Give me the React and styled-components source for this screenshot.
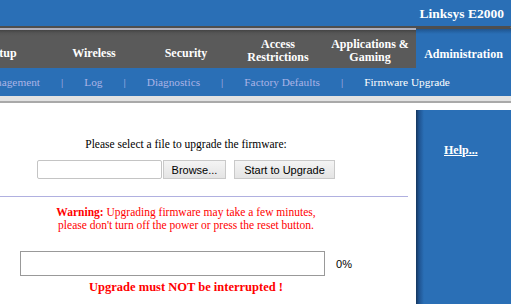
import React from 'react';
import styled, { createGlobalStyle } from 'styled-components';

const BLUE = '#2a6fb6';

const GlobalStyle = createGlobalStyle`
  html, body {
    margin: 0;
    padding: 0;
    background: #fff;
    overflow: hidden;
  }
  body {
    font-family: 'Liberation Serif', 'Times New Roman', serif;
  }
`;

const tabs = [
  { label: 'Setup' },
  { label: 'Wireless' },
  { label: 'Security' },
  { label: 'Access\nRestrictions', lines: 2 },
  { label: 'Applications &\nGaming', lines: 2 },
  { label: 'Administration', active: true },
];

const subItems = [
  { label: 'Management' },
  { label: 'Log' },
  { label: 'Diagnostics' },
  { label: 'Factory Defaults' },
  { label: 'Firmware Upgrade', active: true },
];

const App = () => {
  return (
    <>
      <GlobalStyle />
      <Page>
        <TopBar>
          <Brand>Linksys E2000</Brand>
        </TopBar>
        <TabBar>
          {tabs.map((tab) => (
            <Tab key={tab.label} $active={tab.active} $lines={tab.lines || 1}>
              {tab.label}
            </Tab>
          ))}
        </TabBar>
        <SubNav>
          {subItems.map((item, index) => (
            <React.Fragment key={item.label}>
              {index > 0 && <Pipe>|</Pipe>}
              <SubItem $active={item.active}>{item.label}</SubItem>
            </React.Fragment>
          ))}
        </SubNav>
        <Strip />
        <Body>
          <Content>
            <Section>
              <Prompt>Please select a file to upgrade the firmware:</Prompt>
              <FormRow>
                <FileField />
                <Button>Browse...</Button>
                <Button $wide>Start to Upgrade</Button>
              </FormRow>
            </Section>
            <Rule />
            <Section>
              <Warning>
                <b>Warning:</b> Upgrading firmware may take a few minutes,
                <br />
                please don't turn off the power or press the reset button.
              </Warning>
              <ProgressRow>
                <ProgressBox />
                <Percent>0%</Percent>
              </ProgressRow>
              <Alert>Upgrade must NOT be interrupted !</Alert>
            </Section>
          </Content>
          <HelpPanel>
            <HelpLink>Help...</HelpLink>
          </HelpPanel>
        </Body>
      </Page>
    </>
  );
};

const Page = styled.div`
  width: 511px;
  height: 304px;
  overflow: hidden;
  background: #fff;
`;

const TopBar = styled.div`
  height: 26px;
  background: ${BLUE};
  display: flex;
  align-items: center;
  justify-content: flex-end;
  padding-right: 7px;
`;

const Brand = styled.div`
  color: #fff;
  font-weight: bold;
  font-size: 13.5px;
  padding-top: 2px;
`;

const TabBar = styled.div`
  height: 40px;
  display: flex;
  background: #5a5a5a;
  border-top: 2px solid #4e4e4e;
  border-right: 1px solid #707070;
  margin-left: -44px;
`;

const Tab = styled.div`
  width: ${(p) => (p.$active ? '95px' : '92px')};
  flex-shrink: 0;
  display: flex;
  align-items: center;
  justify-content: center;
  text-align: center;
  white-space: pre-line;
  color: #fff;
  font-weight: bold;
  font-size: 12px;
  line-height: 13px;
  padding-top: ${(p) => (p.$active ? '12px' : p.$lines === 2 ? '5px' : '11px')};
  box-sizing: border-box;
  background: ${(p) =>
    p.$active
      ? `linear-gradient(#4e4e4e 0 1px, #1f558f 1px, ${BLUE} 6px)`
      : 'linear-gradient(#b0b0bd 0 2px, #444 2px, #555 5px, #5a5a5a 8px)'};
`;

const SubNav = styled.div`
  height: 28px;
  background: ${BLUE};
  display: flex;
  align-items: center;
  gap: 21px;
  margin-left: -19px;
  font-size: 11.3px;
`;

const SubItem = styled.span`
  color: ${(p) => (p.$active ? '#fff' : '#aab4e6')};
  white-space: nowrap;
`;

const Pipe = styled.span`
  color: #aab4e6;
`;

const Strip = styled.div`
  height: 5px;
  background: #e2e2e2;
  border-bottom: 2px solid #a9a9a9;
`;

const Body = styled.div`
  display: flex;
  align-items: flex-start;
  gap: 8px;
`;

const Content = styled.div`
  width: 408px;
  flex-shrink: 0;
`;

const Section = styled.div`
  width: 372px;
  display: flex;
  flex-direction: column;
  align-items: center;
  text-align: center;
`;

const Prompt = styled.div`
  margin-top: 35px;
  font-size: 11.5px;
  line-height: 13px;
  color: #000;
`;

const FormRow = styled.div`
  display: flex;
  align-items: center;
  margin-top: 9px;
`;

const FileField = styled.div`
  width: 123px;
  height: 17px;
  border: 1px solid #c4c4c4;
  border-radius: 2px;
  background: #fff;
`;

const Button = styled.div`
  height: 17px;
  display: flex;
  align-items: center;
  justify-content: center;
  box-sizing: content-box;
  width: ${(p) => (p.$wide ? '99px' : '61px')};
  margin-left: ${(p) => (p.$wide ? '8px' : '1px')};
  border: 1px solid #c9c9c9;
  background: linear-gradient(#f4f4f4, #e4e4e4);
  font-family: 'Liberation Sans', Arial, sans-serif;
  font-size: 11px;
  color: #000;
`;

const Rule = styled.div`
  height: 1px;
  background: #b0b0e0;
  margin-top: 17px;
`;

const Warning = styled.div`
  margin-top: 9px;
  font-size: 11.5px;
  line-height: 13px;
  color: #f00;
`;

const ProgressRow = styled.div`
  display: flex;
  align-items: center;
  margin-top: 19px;
  gap: 11px;
`;

const ProgressBox = styled.div`
  width: 303px;
  height: 23px;
  border: 1px solid #999;
  background: #fff;
`;

const Percent = styled.span`
  font-family: 'Liberation Sans', Arial, sans-serif;
  font-size: 11px;
  color: #000;
`;

const Alert = styled.div`
  margin-top: 4px;
  font-size: 12.5px;
  font-weight: bold;
  color: #f00;
`;

const HelpPanel = styled.div`
  margin-top: 7px;
  width: 95px;
  height: 200px;
  flex-shrink: 0;
  background: linear-gradient(90deg, #15365e 0, #1f5390 3px, ${BLUE} 8px);
  padding: 30px 0 0 28px;
  box-sizing: border-box;
`;

const HelpLink = styled.a`
  color: #fff;
  font-weight: bold;
  font-size: 12px;
  text-decoration: underline;
`;

export default App;
